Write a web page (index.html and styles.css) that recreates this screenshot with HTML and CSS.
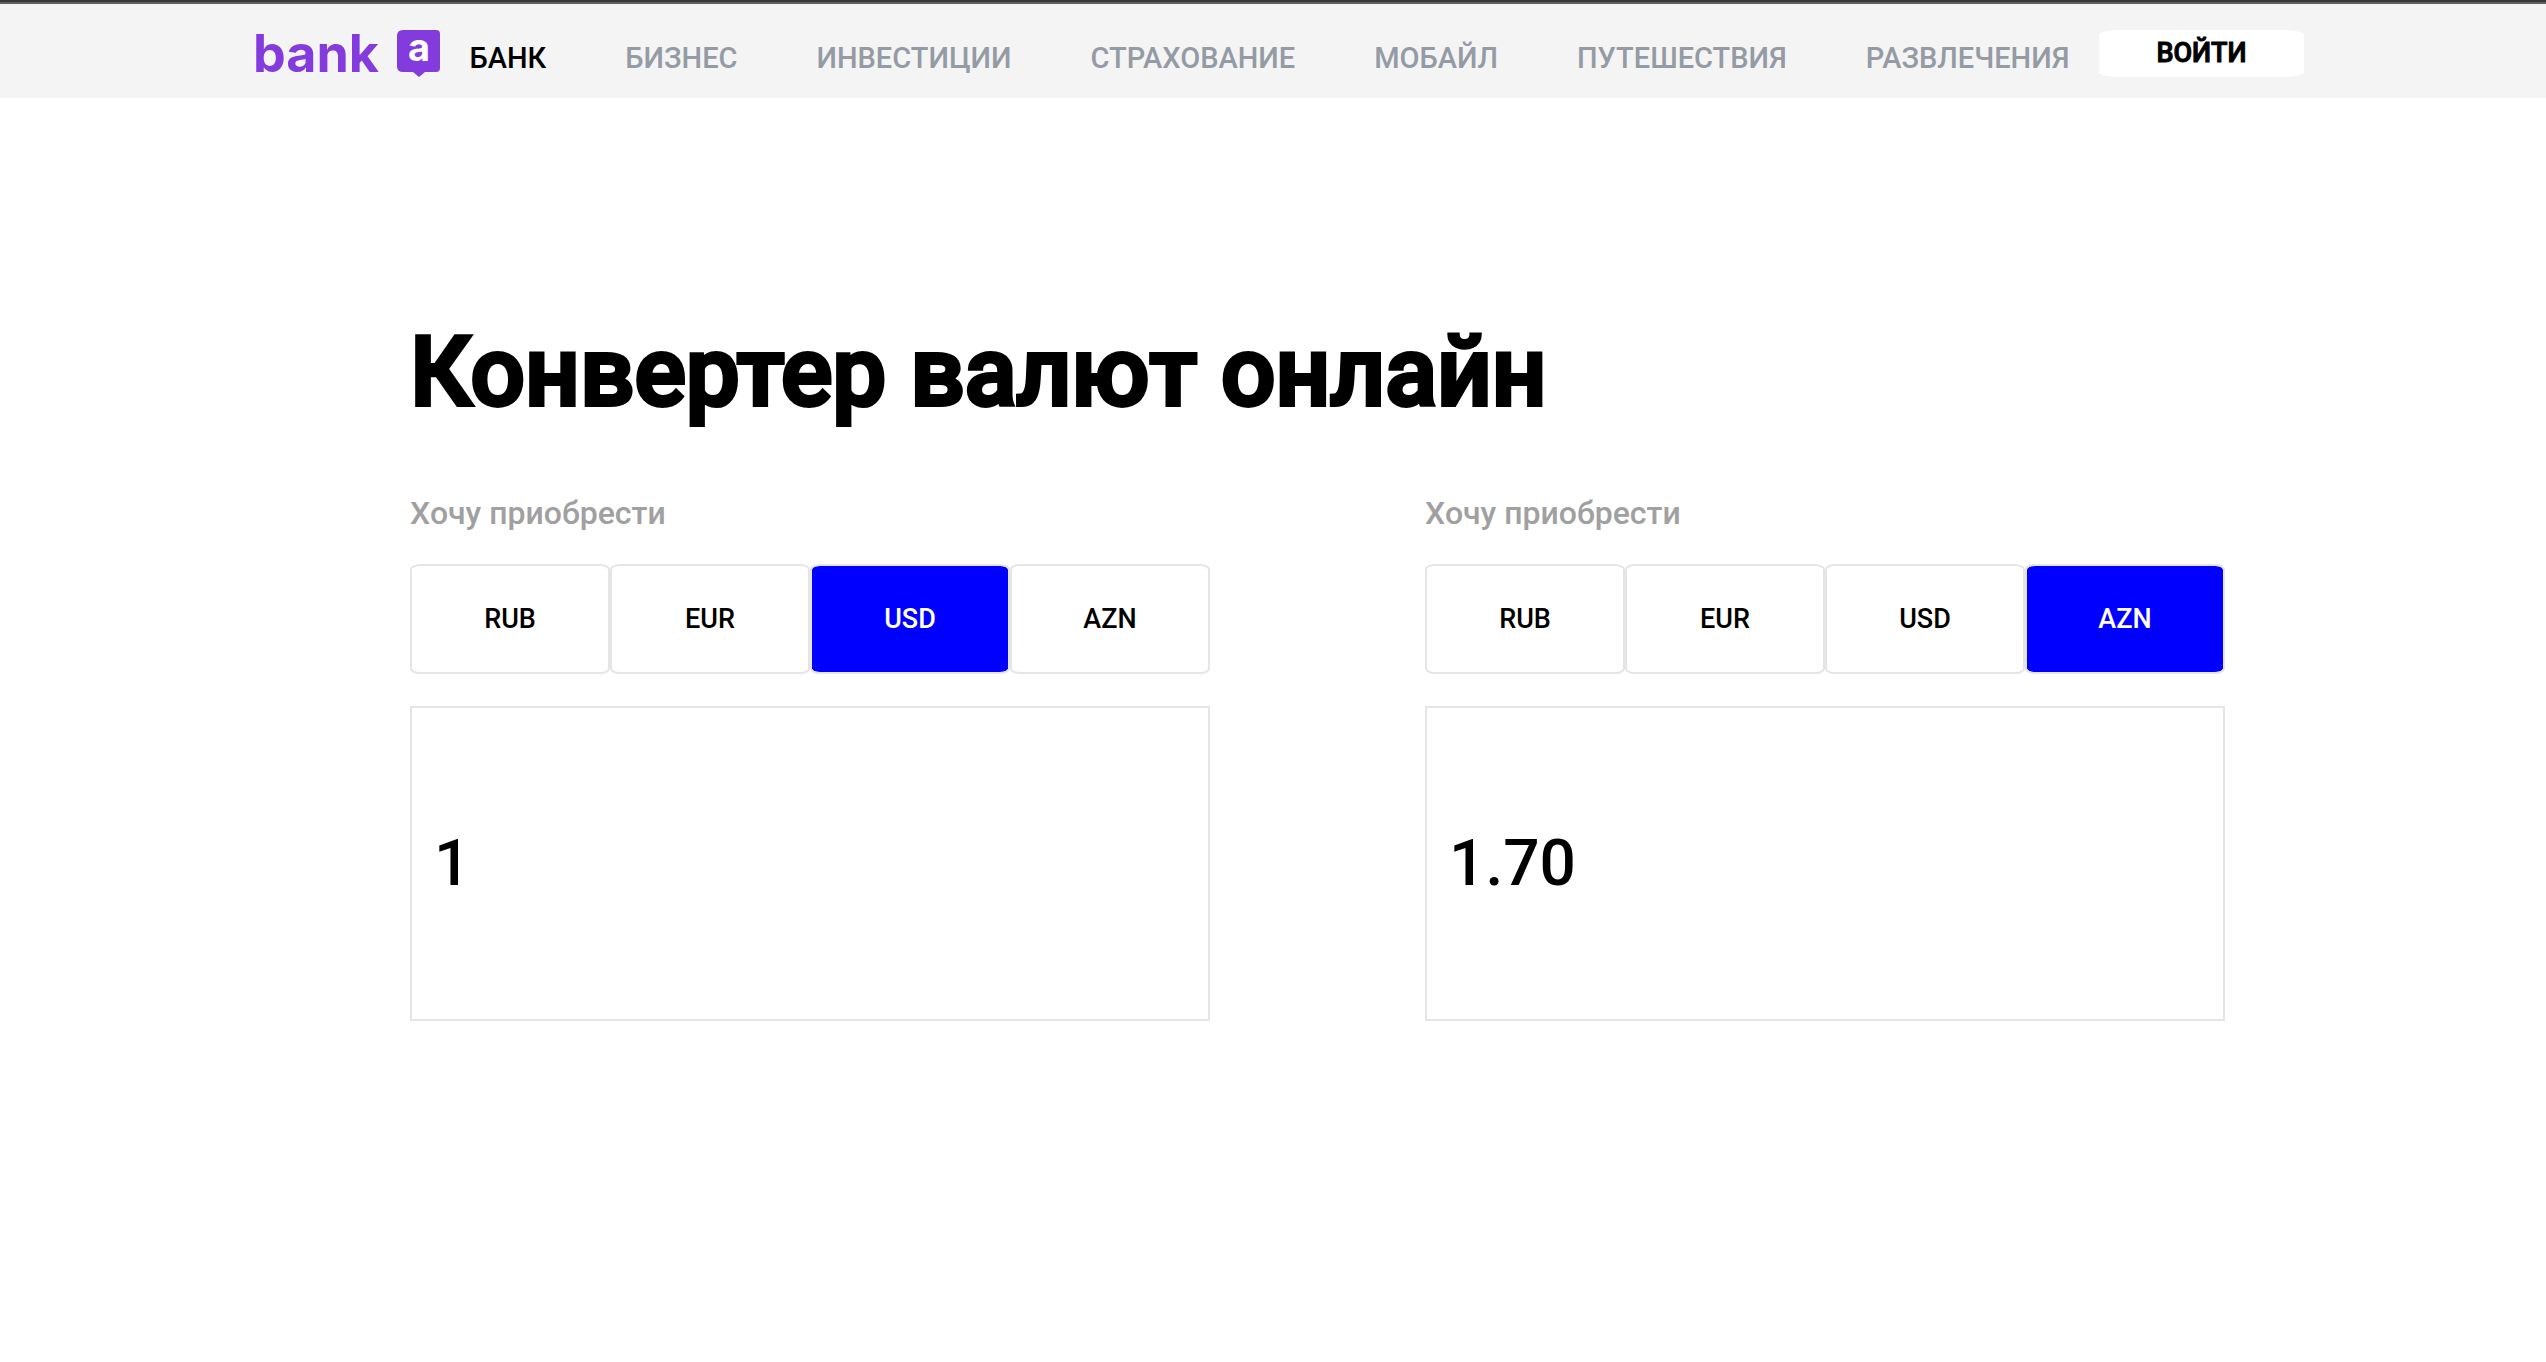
FILE: index.html
```html
<!DOCTYPE html>
<html lang="ru">
<head>
  <meta charset="utf-8">
  <title>Конвертер валют онлайн</title>
  <link rel="stylesheet" href="styles.css">
</head>
<body>
  <header class="header">
    <a class="logo" href="#" aria-label="bank a">
      <svg class="logo-image" viewBox="0 0 184 47" width="184" height="47">
        <text class="logo-word" x="-3" y="42">bank</text>
        <path class="logo-badge" d="M147 0h33q4 0 4 4v34q0 4-4 4h-11l-6 5-6-5h-10q-6 0-6-6V6q0-6 6-6z"/>
        <text class="logo-letter" x="163" y="31">a</text>
      </svg>
    </a>
    <nav class="nav">
      <a class="nav-link nav-link-active" href="#">БАНК</a>
      <a class="nav-link" href="#">БИЗНЕС</a>
      <a class="nav-link" href="#">ИНВЕСТИЦИИ</a>
      <a class="nav-link" href="#">СТРАХОВАНИЕ</a>
      <a class="nav-link" href="#">МОБАЙЛ</a>
      <a class="nav-link" href="#">ПУТЕШЕСТВИЯ</a>
      <a class="nav-link" href="#">РАЗВЛЕЧЕНИЯ</a>
    </nav>
    <button class="login" type="button">ВОЙТИ</button>
  </header>
  <main class="main">
    <h1 class="title">Конвертер валют онлайн</h1>
    <div class="converter">
      <section class="panel">
        <label class="panel-label" for="amount-from">Хочу приобрести</label>
        <div class="tabs">
          <button class="tab" type="button">RUB</button>
          <button class="tab" type="button">EUR</button>
          <button class="tab tab-active" type="button">USD</button>
          <button class="tab" type="button">AZN</button>
        </div>
        <input class="amount" id="amount-from" type="text" value="1">
      </section>
      <section class="panel">
        <label class="panel-label" for="amount-to">Хочу приобрести</label>
        <div class="tabs">
          <button class="tab" type="button">RUB</button>
          <button class="tab" type="button">EUR</button>
          <button class="tab" type="button">USD</button>
          <button class="tab tab-active" type="button">AZN</button>
        </div>
        <input class="amount" id="amount-to" type="text" value="1.70">
      </section>
    </div>
  </main>
</body>
</html>
```
FILE: styles.css
```css
* {
  box-sizing: border-box;
  margin: 0;
  padding: 0;
}

body {
  font-family: Roboto, "Liberation Sans", sans-serif;
  font-weight: 500;
  color: #000;
  background: #fff;
  border-top: 2px solid #383838;
}

.header {
  display: flex;
  justify-content: space-between;
  align-items: flex-start;
  padding: 26px 242px 21px 256px;
  background: #f4f4f4;
  border-top: 2px solid #606060;
}

.logo-image {
  display: block;
  overflow: visible;
}

.logo-word,
.logo-letter {
  font-family: Inter, sans-serif;
  font-weight: 700;
}

.logo-word {
  font-size: 52px;
  fill: #843bdd;
}

.logo-badge {
  fill: #843bdd;
}

.logo-letter {
  font-size: 38px;
  text-anchor: middle;
  fill: #fff;
}

.nav {
  display: flex;
  gap: 79px;
  padding-top: 10px;
}

.nav-link {
  font-size: 29px;
  line-height: 36px;
  color: #959ba4;
  text-decoration: none;
}

.nav-link-active {
  color: #000;
}

.login {
  width: 205px;
  height: 47px;
  padding-bottom: 2px;
  border: 0;
  border-radius: 10%;
  background: #fff;
  color: #000;
  font: inherit;
  font-size: 27px;
  -webkit-text-stroke: 1px #000;
}

.main {
  padding: 214px 321px 0 410px;
}

.title {
  font-size: 96px;
  line-height: 120px;
  font-weight: 500;
  -webkit-text-stroke: 4px #000;
}

.converter {
  display: grid;
  grid-template-columns: 1fr 1fr;
  gap: 215px;
  margin-top: 62px;
}

.panel-label {
  display: block;
  font-size: 32px;
  line-height: 38px;
  color: #a0a0a0;
}

.tabs {
  display: grid;
  grid-template-columns: repeat(4, 1fr);
  margin: 32px 0;
}

.tab {
  height: 110px;
  border: 2px solid #e5e5e5;
  border-radius: 5%;
  background: #fff;
  color: #000;
  font: inherit;
  font-size: 27px;
}

.tab-active {
  background: #00f;
  background-clip: padding-box;
  color: #fff;
}

.amount {
  display: block;
  width: 100%;
  height: 315px;
  padding: 0 22px;
  border: 2px solid #e5e5e5;
  background: #fff;
  color: #000;
  font: inherit;
  font-size: 64px;
}
```
